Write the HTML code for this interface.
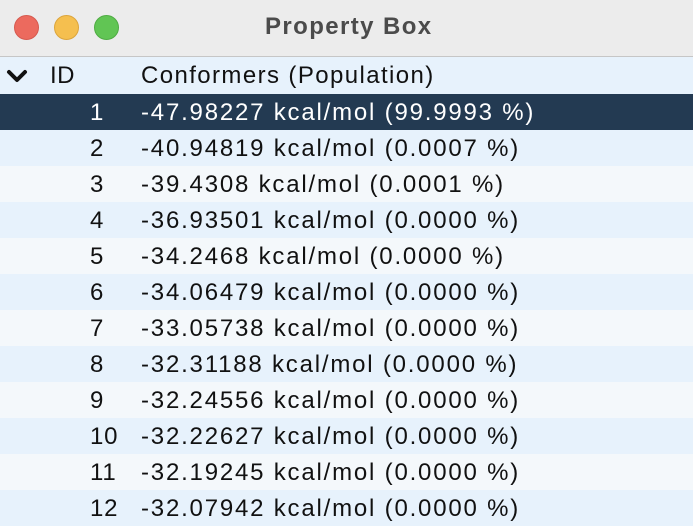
<!DOCTYPE html>
<html><head><style>
*{margin:0;padding:0;box-sizing:border-box}
body{width:693px;height:524px;overflow:hidden;background:#f4f8fb;font-family:"Liberation Sans",sans-serif;position:relative}
.title{position:absolute;left:0;top:0;width:693px;height:57px;background:#ececec;border-bottom:1px solid #c6c6c6}
.title .t{position:absolute;left:265px;top:13px;font-size:24px;font-weight:bold;color:#4b4b4b;letter-spacing:1.4px}
.dot{position:absolute;top:15px;width:25px;height:25px;border-radius:50%}
.row{position:absolute;left:0;width:693px;height:36px;font-size:24px;color:#111}
.row span{position:absolute;top:5px;letter-spacing:1.8px}
.row span.id{left:90px;letter-spacing:0.8px}.c{left:141px}
.e{background:#e7f2fc}.o{background:#f4f8fb}
.sel{background:#233a52;color:#fff}
</style></head><body>
<div class="title">
<div class="dot" style="left:14px;background:#ec6a5e;border:1px solid #d65a4f"></div>
<div class="dot" style="left:54px;background:#f5bf4f;border:1px solid #dca53c"></div>
<div class="dot" style="left:94px;background:#61c554;border:1px solid #4fac43"></div>
<div class="t">Property Box</div>
</div>
<div class="row e" style="top:57px;height:37px">
<svg style="position:absolute;left:6px;top:12px" width="22" height="14" viewBox="0 0 22 14"><path d="M3 3 L11 11 L19 3" stroke="#111" stroke-width="4" fill="none" stroke-linecap="round" stroke-linejoin="round"/></svg>
<span style="left:50px;letter-spacing:0.5px">ID</span><span class="c" style="letter-spacing:1.4px">Conformers (Population)</span></div>
<div class="row sel" style="top:94px"><span class="id">1</span><span class="c">-47.98227 kcal/mol (99.9993 %)</span></div>
<div class="row e" style="top:130px"><span class="id">2</span><span class="c">-40.94819 kcal/mol (0.0007 %)</span></div>
<div class="row o" style="top:166px"><span class="id">3</span><span class="c">-39.4308 kcal/mol (0.0001 %)</span></div>
<div class="row e" style="top:202px"><span class="id">4</span><span class="c">-36.93501 kcal/mol (0.0000 %)</span></div>
<div class="row o" style="top:238px"><span class="id">5</span><span class="c">-34.2468 kcal/mol (0.0000 %)</span></div>
<div class="row e" style="top:274px"><span class="id">6</span><span class="c">-34.06479 kcal/mol (0.0000 %)</span></div>
<div class="row o" style="top:310px"><span class="id">7</span><span class="c">-33.05738 kcal/mol (0.0000 %)</span></div>
<div class="row e" style="top:346px"><span class="id">8</span><span class="c">-32.31188 kcal/mol (0.0000 %)</span></div>
<div class="row o" style="top:382px"><span class="id">9</span><span class="c">-32.24556 kcal/mol (0.0000 %)</span></div>
<div class="row e" style="top:418px"><span class="id">10</span><span class="c">-32.22627 kcal/mol (0.0000 %)</span></div>
<div class="row o" style="top:454px"><span class="id">11</span><span class="c">-32.19245 kcal/mol (0.0000 %)</span></div>
<div class="row e" style="top:490px"><span class="id">12</span><span class="c">-32.07942 kcal/mol (0.0000 %)</span></div>
</body></html>
